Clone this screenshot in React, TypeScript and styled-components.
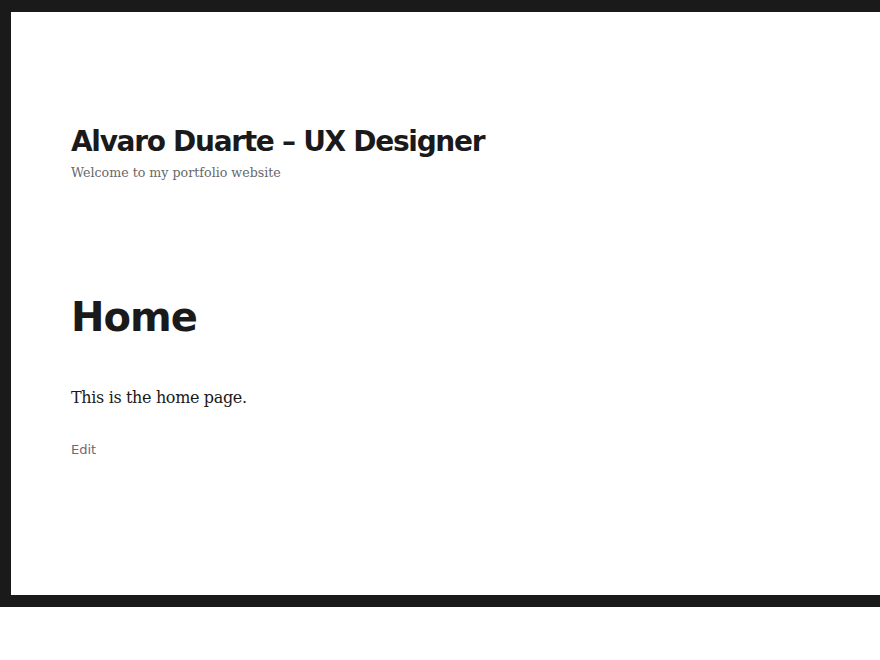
import React from "react";
import styled, { createGlobalStyle } from "styled-components";

const Global = createGlobalStyle`
  html, body { margin: 0; padding: 0; background: #fff; }
  body { font-family: "DejaVu Serif", serif; }
`;

const Frame = styled.div`
  background: #1a1a1a;
  padding: 12px 0 12px 11px;
`;

const Sheet = styled.div`
  background: #fff;
  height: 583px;
  box-sizing: border-box;
  padding: 112px 0 0 60px;
  display: flex;
  flex-direction: column;
`;

const Header = styled.header`
  display: flex;
  flex-direction: column;
`;

const SiteTitle = styled.h1`
  margin: 0;
  font-family: "DejaVu Sans", sans-serif;
  font-weight: 700;
  font-size: 28px;
  line-height: 35px;
  color: #1a1a1a;
  letter-spacing: -1.3px;
`;

const Tagline = styled.p`
  margin: 4px 0 0;
  font-family: "DejaVu Serif", serif;
  font-size: 12.65px;
  line-height: 20px;
  color: #686868;
`;

const Article = styled.article`
  margin-top: 110px;
  display: flex;
  flex-direction: column;
  align-items: flex-start;
`;

const EntryTitle = styled.h2`
  margin: 0;
  font-family: "DejaVu Sans", sans-serif;
  font-weight: 700;
  font-size: 40px;
  line-height: 48px;
  color: #1a1a1a;
  letter-spacing: -1px;
`;

const Body = styled.p`
  margin: 43px 0 0;
  font-family: "DejaVu Serif", serif;
  font-size: 16px;
  line-height: 28px;
  color: #1a1a1a;
  letter-spacing: -0.35px;
`;

const EditLink = styled.a`
  display: block;
  margin-top: 28px;
  font-family: "DejaVu Sans", sans-serif;
  font-size: 13px;
  line-height: 20px;
  color: #6f6873;
  text-decoration: none;
`;

export default function App() {
  return (
    <>
      <Global />
      <Frame>
        <Sheet>
          <Header>
            <SiteTitle>Alvaro Duarte – UX Designer</SiteTitle>
            <Tagline>Welcome to my portfolio website</Tagline>
          </Header>
          <Article>
            <EntryTitle>Home</EntryTitle>
            <Body>This is the home page.</Body>
            <EditLink href="#">Edit</EditLink>
          </Article>
        </Sheet>
      </Frame>
    </>
  );
}
